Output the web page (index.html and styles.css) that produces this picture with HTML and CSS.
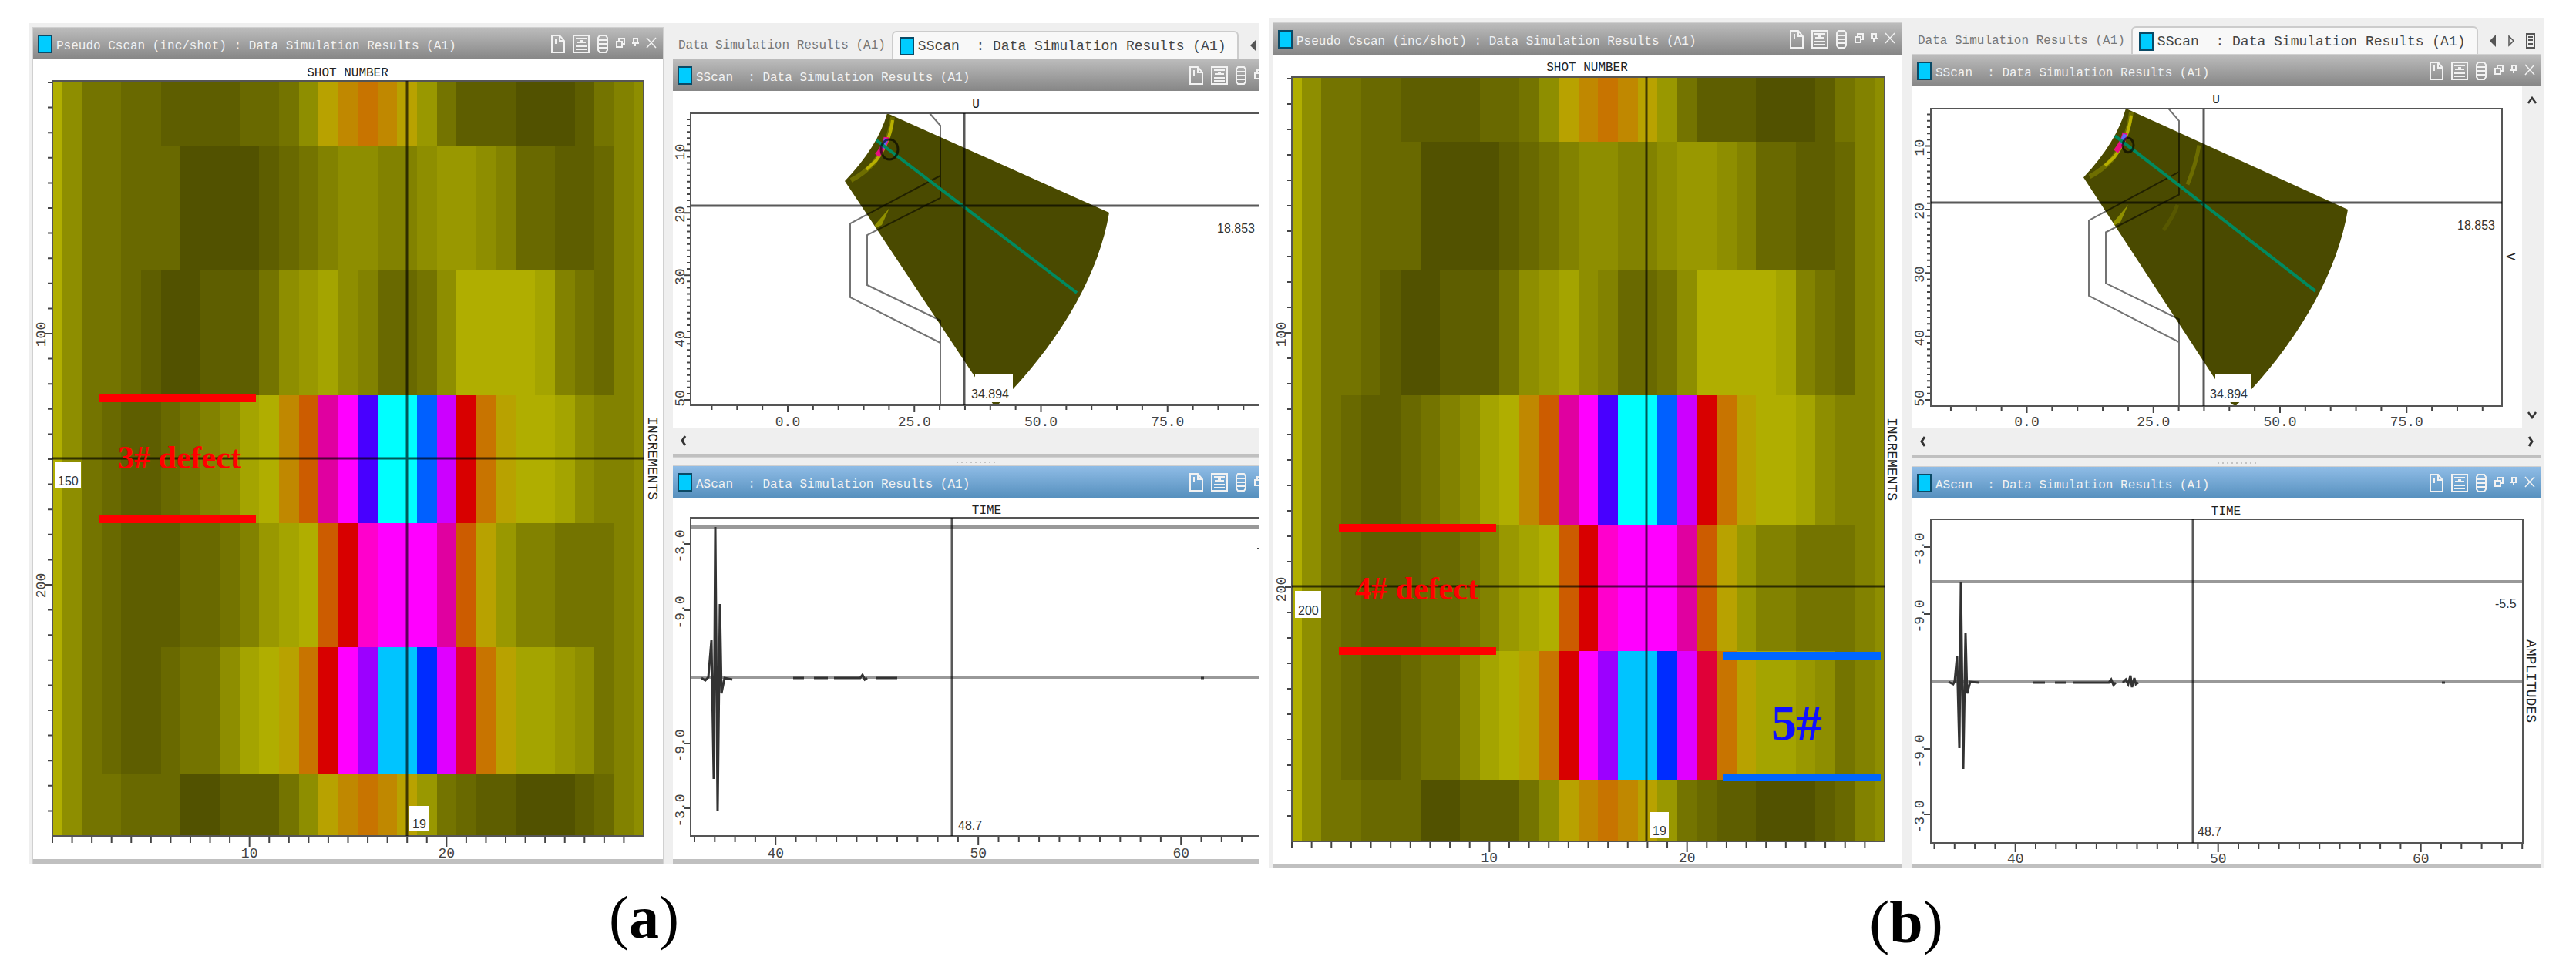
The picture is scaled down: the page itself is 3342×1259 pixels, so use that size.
FILE: index.html
```html
<!DOCTYPE html>
<html lang="en">
<head>
<meta charset="utf-8">
<title>Data Simulation Results</title>
<link rel="stylesheet" href="styles.css">
</head>
<body>
<svg class="defs" width="0" height="0" aria-hidden="true">
  <symbol id="i-doc" viewBox="0 0 20 26"><path d="M2 2h10l6 7v15H2zM12 2v7h6M7 6v7" fill="none" stroke="currentColor" stroke-width="2"/></symbol>
  <symbol id="i-grid" viewBox="0 0 24 26"><path d="M2 2h20v22H2z" fill="none" stroke="currentColor" stroke-width="2"/><path d="M5 6h14M5 20h14M5 16h14M6 11h12M10 9h4" stroke="currentColor" stroke-width="2" fill="none"/></symbol>
  <symbol id="i-db" viewBox="0 0 16 26"><path d="M4 2h8l2 3v16l-2 3H4l-2-3V5zM2 8h12M2 13h12M2 18h12" fill="none" stroke="currentColor" stroke-width="2"/></symbol>
  <symbol id="i-restore" viewBox="0 0 13 26"><path d="M5 9V6h7v7H9M2 10h7v7H2z" fill="none" stroke="currentColor" stroke-width="2"/></symbol>
  <symbol id="i-pin" viewBox="0 0 11 26"><path d="M2 6h7M3 6v6M8 6v6M1 12h9M5 12v4" fill="none" stroke="currentColor" stroke-width="2"/></symbol>
  <symbol id="i-close" viewBox="0 0 14 26"><path d="M1 5l12 13M13 5L1 18" fill="none" stroke="currentColor" stroke-width="1.5"/></symbol>
  <symbol id="i-left" viewBox="0 0 10 16"><path d="M9 0v16L1 8z" fill="currentColor"/></symbol>
  <symbol id="i-right" viewBox="0 0 10 16"><path d="M2 2v12l6-6z" fill="none" stroke="currentColor" stroke-width="1.5"/></symbol>
  <symbol id="i-list" viewBox="0 0 12 20"><path d="M1 1h10v18H1zM3 5h6M3 9h6M3 14h6" fill="none" stroke="currentColor" stroke-width="2"/></symbol>
  <symbol id="i-chev" viewBox="0 0 10 14"><path d="M7 1L3 7l4 6" fill="none" stroke="currentColor" stroke-width="3"/></symbol>
  <symbol id="i-chev-r" viewBox="0 0 10 14"><path d="M3 1l4 6-4 6" fill="none" stroke="currentColor" stroke-width="3"/></symbol>
  <symbol id="i-up" viewBox="0 0 14 10"><path d="M2 9l5-7 5 7" fill="none" stroke="currentColor" stroke-width="2.5"/></symbol>
  <symbol id="i-down" viewBox="0 0 14 10"><path d="M2 1l5 7 5-7" fill="none" stroke="currentColor" stroke-width="2.5"/></symbol>
</svg>

<main class="page">
  <figure class="panel">
    <div class="workspace ws-a">
      <section class="window tall">
        <header class="titlebar"><span class="chip"></span><h2>Pseudo Cscan (inc/shot) : Data Simulation Results (A1)</h2><div class="tools"></div></header>
        <svg class="plot" data-kind="cscan" data-panel="a" viewBox="43 77 817 1038" role="img" aria-label="Pseudo C-scan"></svg>
      </section>
      <div class="column">
        <nav class="tabs">
          <button class="tab" type="button">Data Simulation Results (A1)</button>
          <button class="tab active" type="button"><span class="chip"></span>SScan  : Data Simulation Results (A1)</button>
          <button class="arrow" type="button" aria-label="Previous tab"><svg width="10" height="16"><use href="#i-left"/></svg></button>
        </nav>
        <section class="window upper">
          <header class="titlebar"><span class="chip"></span><h2>SScan  : Data Simulation Results (A1)</h2><div class="tools"></div></header>
          <svg class="plot" data-kind="sscan" data-panel="a" viewBox="873 118 761 437" role="img" aria-label="S-scan"></svg>
          <div class="hscroll"><button type="button" aria-label="Scroll left"><svg width="10" height="14"><use href="#i-chev"/></svg></button></div>
        </section>
        <div class="splitter"></div>
        <section class="window">
          <header class="titlebar selected"><span class="chip"></span><h2>AScan  : Data Simulation Results (A1)</h2><div class="tools"></div></header>
          <svg class="plot" data-kind="ascan" data-panel="a" viewBox="873 646 761 469" role="img" aria-label="A-scan"></svg>
        </section>
      </div>
    </div>
    <figcaption>(<b>a</b>)</figcaption>
  </figure>

  <figure class="panel">
    <div class="workspace ws-b">
      <section class="window tall">
        <header class="titlebar"><span class="chip"></span><h2>Pseudo Cscan (inc/shot) : Data Simulation Results (A1)</h2><div class="tools"></div></header>
        <svg class="plot" data-kind="cscan" data-panel="b" viewBox="1652 71 815 1051" role="img" aria-label="Pseudo C-scan"></svg>
      </section>
      <div class="column">
        <nav class="tabs">
          <button class="tab" type="button">Data Simulation Results (A1)</button>
          <button class="tab active" type="button"><span class="chip"></span>SScan  : Data Simulation Results (A1)</button>
          <button class="arrow" type="button" aria-label="Previous tab"><svg width="10" height="16"><use href="#i-left"/></svg></button>
          <button class="arrow" type="button" aria-label="Next tab"><svg width="10" height="16"><use href="#i-right"/></svg></button>
          <button class="arrow" type="button" aria-label="Tab list"><svg width="12" height="20"><use href="#i-list"/></svg></button>
        </nav>
        <section class="window upper">
          <header class="titlebar"><span class="chip"></span><h2>SScan  : Data Simulation Results (A1)</h2><div class="tools"></div></header>
          <div class="scrollarea">
            <svg class="plot" data-kind="sscan" data-panel="b" viewBox="2481 112 791 443" role="img" aria-label="S-scan"></svg>
            <div class="vscroll">
              <button type="button" aria-label="Scroll up"><svg width="14" height="10"><use href="#i-up"/></svg></button>
              <button type="button" aria-label="Scroll down"><svg width="14" height="10"><use href="#i-down"/></svg></button>
            </div>
          </div>
          <div class="hscroll">
            <button type="button" aria-label="Scroll left"><svg width="10" height="14"><use href="#i-chev"/></svg></button>
            <button type="button" aria-label="Scroll right"><svg width="10" height="14"><use href="#i-chev-r"/></svg></button>
          </div>
        </section>
        <div class="splitter"></div>
        <section class="window">
          <header class="titlebar selected"><span class="chip"></span><h2>AScan  : Data Simulation Results (A1)</h2><div class="tools"></div></header>
          <svg class="plot" data-kind="ascan" data-panel="b" viewBox="2481 647 816 475" role="img" aria-label="A-scan"></svg>
        </section>
      </div>
    </div>
    <figcaption>(<b>b</b>)</figcaption>
  </figure>
</main>
<script src="plots.js"></script>
</body>
</html>
```

FILE: styles.css
```css
* { box-sizing: border-box; }

body {
  margin: 0;
  background: #fff;
  font-family: "Liberation Mono", monospace;
  font-size: 16px;
  color: #333;
}

.defs { position: absolute; }

.page {
  display: grid;
  grid-template-columns: 1597fr 1654fr;
  column-gap: 12px;
  align-items: center;
  padding: 24px 42px 0 37px;
}

.panel { margin: 0; min-width: 0; }

.workspace {
  display: grid;
  background: #efefef;
  overflow: hidden;
}

.ws-a {
  grid-template-columns: 817fr 761fr;
  column-gap: 13px;
  padding-left: 6px;
}

.ws-b {
  grid-template-columns: 815fr 816fr;
  column-gap: 14px;
  padding: 0 3px 0 6px;
}

.window {
  background: #fff;
  border-bottom: 6px solid #c0c0c0;
  outline: 1px solid #d0d0d0;
}

.ws-b .window { border-bottom-width: 5px; }
.workspace .upper { border-bottom-width: 4px; }

.tall { margin-top: 6px; }

.column { min-width: 0; overflow: hidden; }

.titlebar {
  display: flex;
  align-items: center;
  min-width: 815px;
  height: 41px;
  padding: 0 8px 0 6px;
  background: linear-gradient(#bcbcbc, #868686);
  color: #f2f2f2;
}

.tall .titlebar { min-width: 0; }

.titlebar.selected { background: linear-gradient(#8fbce6, #5690be); }

.titlebar h2 {
  flex: 1;
  margin: 0;
  padding: 6px 0 0 5px;
  font-size: 16px;
  font-weight: normal;
  line-height: 20px;
  white-space: pre;
}

.chip {
  flex: none;
  width: 19px;
  height: 24px;
  border: 2px solid #0a4a66;
  background: #00ccff;
}

.tools { display: flex; gap: 8px; }

button {
  display: flex;
  align-items: center;
  padding: 0;
  border: 0;
  background: none;
  color: inherit;
  font: inherit;
}

.tabs {
  display: flex;
  align-items: flex-end;
  height: 47px;
  padding-left: 7px;
  white-space: pre;
}

.tab { flex: none; height: 37px; color: #777; }

.tab.active {
  gap: 5px;
  margin-left: 8px;
  padding: 0 14px 0 8px;
  border: 2px solid #ccc;
  border-bottom: 0;
  border-radius: 6px 6px 0 0;
  background: #f8f8f8;
  color: #444;
  font-size: 18px;
}

.arrow { height: 37px; margin-left: 14px; color: #555; }

.plot { display: block; width: 100%; height: auto; overflow: visible; }

.scrollarea { display: grid; grid-template-columns: 791fr 25fr; }

.vscroll {
  display: flex;
  flex-direction: column;
  justify-content: space-between;
  align-items: center;
  padding: 13px 0 11px;
  background: #efefef;
}

.hscroll {
  display: flex;
  justify-content: space-between;
  height: 35px;
  padding: 0 9px;
  background: #efefef;
}

.ws-a .hscroll { height: 34px; }

.splitter {
  height: 12px;
  background: repeating-linear-gradient(90deg, #c4c4c4 0 2px, #efefef 2px 6px) 52% 6px / 54px 2px no-repeat;
}

figcaption {
  padding-top: 22px;
  font: 78px/96px "Liberation Serif", serif;
  color: #000;
  text-align: center;
}

.axis { stroke: #444; stroke-width: 2; fill: none; }
.frame { stroke: #555; stroke-width: 2; fill: none; }
.soft { stroke: #999; stroke-width: 4; fill: none; }
.cursor { stroke: #000; stroke-opacity: .65; stroke-width: 3; fill: none; }
.profile { stroke: #000; stroke-opacity: .55; stroke-width: 2; fill: none; }
.beam { stroke: #008a60; stroke-width: 4; fill: none; }
.wave { stroke: #333; stroke-width: 3; fill: none; }
.tag { fill: #fff; }
.mark-red { fill: #ff0000; }
.mark-blue { fill: #0066ff; }

.num, .name { font: 18px "Liberation Mono", monospace; fill: #444; text-anchor: middle; }
.head { font: 16px "Liberation Mono", monospace; fill: #222; text-anchor: middle; }
.name { fill: #222; }
.value { font: 16px "Liberation Sans", sans-serif; fill: #333; }
.note { font: bold 42px "Liberation Serif", serif; fill: #ff0000; text-anchor: middle; }
.note-big { font: bold 66px "Liberation Serif", serif; fill: #1010ff; text-anchor: middle; }
```

FILE: plots.js
```js
const PALETTE = {
  a: '#b0ae00', b: '#a4a400', c: '#999800', d: '#8e8e00', e: '#828200',
  f: '#747400', g: '#696900', h: '#5e5e00', i: '#525200', j: '#b8a200',
  k: '#c08800', l: '#c87400', m: '#cc5c00', n: '#d80000', o: '#e000a0',
  p: '#ff00ff', q: '#4800ff', r: '#00ffff', s: '#0060ff', t: '#cc00ff',
  u: '#ff00cc', v: '#9c00ff', w: '#00c4ff', x: '#002cff', y: '#e00038', z: '#e000ff'
};

// One letter per shot, one string per increment band
const BANDS = [
  'adffgghhhhggfdjklkjcfhhhiiihfed',
  'adffgggiiiihgfeddeedccdegghhged',
  'adffghiihhhfdcbdeggfdaaaabefged',
  'adfghhgfedbakmopqrrstnljaabdeed',
  'adfghhhggfecbamnupppomjceefffed',
  'adfghhgffdbajlnpvwwxzyljbbcdfed',
  'adffgggiihhhfdjklkjcfghhiiihged'
];

const CSCAN = {
  a: { left: 68, right: 835, rows: [105, 189, 351, 513, 679, 840, 1005, 1085], tick0: 107, step: 32.6,
       cx: 528, cy: 595, head: [451, 99], name: [841, 595], nums: [[59, 434, '100'], [59, 760, '200']], bottom: 1113,
       tags: [[71, 600, 34, 34, '150'], [531, 1046, 26, 33, '19']] },
  b: { left: 1676, right: 2445, rows: [100, 184, 350, 513, 682, 845, 1012, 1092], tick0: 102, step: 33,
       cx: 2136, cy: 761, head: [2059, 92], name: [2449, 596], nums: [[1668, 434, '100'], [1668, 765, '200']], bottom: 1119,
       tags: [[1680, 767, 34, 35, '200'], [2140, 1054, 25, 34, '19']] }
};

const rect = (x, y, w, h, attrs) => `<rect x="${x}" y="${y}" width="${w}" height="${h}" ${attrs}/>`;
const path = (d, cls) => `<path class="${cls}" d="${d}"/>`;
const text = (x, y, s, cls, turn) =>
  `<text class="${cls}" ${turn ? `transform="translate(${x} ${y}) rotate(${turn})"` : `x="${x}" y="${y}"`}>${s}</text>`;

function cscan(key) {
  const c = CSCAN[key], step = (c.right - c.left) / 30, top = c.rows[0], end = c.rows[7];
  let out = '<g shape-rendering="crispEdges">';
  BANDS.forEach((band, r) => [...band].forEach((ch, i) => {
    const x0 = Math.round(Math.max(c.left, c.left + (i - .5) * step));
    const x1 = Math.round(Math.min(c.right, c.left + (i + .5) * step));
    out += rect(x0, c.rows[r], x1 - x0, c.rows[r + 1] - c.rows[r], `fill="${PALETTE[ch]}"`);
  }));
  out += '</g>';
  let ticks = '';
  for (let i = 0; i < 30; i++) ticks += `M${c.left + i * step} ${end}v${i === 10 || i === 20 ? 14 : 9}`;
  for (let i = 0; i < 30; i++) ticks += `M${c.left} ${c.tick0 + i * c.step}h-${i === 10 || i === 20 ? 9 : 6}`;
  out += path(ticks, 'axis') + rect(c.left, top, c.right - c.left, end - top, 'class="frame"');
  out += path(`M${c.cx} ${top}V${end}M${c.left} ${c.cy}H${c.right}`, 'cursor');
  out += text(...c.head, 'SHOT NUMBER', 'head') + text(...c.name, 'INCREMENTS', 'name', 90);
  c.nums.forEach(n => { out += text(...n, 'num', -90); });
  out += text(c.left + 10 * step, c.bottom, '10', 'num') + text(c.left + 20 * step, c.bottom, '20', 'num');
  c.tags.forEach(([x, y, w, h, s]) => { out += rect(x, y, w, h, 'class="tag"') + text(x + 4, y + h - 4, s, 'value'); });
  const bar = (x, y, w, cls) => rect(x, y, w, 10, `class="${cls}"`);
  if (key === 'a') {
    out += bar(128, 512, 204, 'mark-red') + bar(128, 669, 204, 'mark-red') + text(233, 608, '3# defect', 'note');
  } else {
    out += bar(1737, 680, 204, 'mark-red') + bar(1737, 840, 204, 'mark-red') + text(1838, 778, '4# defect', 'note');
    out += bar(2235, 846, 205, 'mark-blue') + bar(2235, 1004, 205, 'mark-blue') + text(2331, 960, '5#', 'note-big');
  }
  return out;
}

// Sector drawing, shared by both panels
function sector(key) {
  const blips = key === 'b'
    ? `<path d="M1246 194Q1242 218 1231 244" stroke="#6c6c00" stroke-width="5" fill="none"/>
       <path d="M1218 270Q1212 286 1200 302" stroke="#585800" stroke-width="5" fill="none"/>` : '';
  return `
    <path d="M1151 147L1439 276C1425 358 1375 445 1294 526Q1292 526 1288 524L1096 235Q1139 190 1151 147z" fill="#4a4a00"/>
    <path d="M1158 152Q1154 186 1133 212Q1120 226 1104 234" stroke="#6e6e00" stroke-width="6" fill="none"/>
    <path d="M1158 156Q1154 186 1136 209L1124 220" stroke="#b8b000" stroke-width="4" fill="none"/>
    <path d="M1150 178Q1149 188 1138 202" stroke="#e81080" stroke-width="7" fill="none"/>
    <path d="M1150 180L1145 192" stroke="#6068ff" stroke-width="5" fill="none"/>
    <path d="M1154 270L1144 292L1136 296L1135 292z" fill="#909000"/>${blips}
    <path class="profile" d="M1206 147L1220 163V257L1125 305V370L1220 416V526M1220 228L1103 290V386L1220 445"/>
    <path class="beam" d="M1137 182L1397 380"/>
    <ellipse cx="1154" cy="194" rx="${key === 'a' ? 11 : 7}" ry="${key === 'a' ? 13 : 9}" class="cursor"/>`;
}

const SSCAN = {
  a: { left: 896, right: 1640, top: 147, end: 526, u0: 1022, v0: 195.4, dv: 8.09, cx: 1251, cy: 267,
       head: [1266, 140], numX: 888, val: [1579, 302], tag: [1265, 486, 49, 36], tagText: 1260, move: '' },
  b: { left: 2505, right: 3246, top: 141, end: 527, u0: 2629.5, v0: 189.6, dv: 8.236, cx: 2859, cy: 263,
       head: [2875, 134], numX: 2496, val: [3188, 298], tag: [2874, 486, 47, 36], tagText: 2867,
       move: 'translate(1607 -9) scale(1 1.018)' }
};

function sscan(key) {
  const c = SSCAN[key], du = 32.85;
  let out = `<g transform="${c.move}">${sector(key)}</g>`, ticks = '';
  for (let i = -3; i < 19; i++) {
    const x = c.u0 + i * du;
    if (x < c.right) ticks += `M${x} ${c.end}v${i % 5 ? 6 : 9}`;
  }
  for (let v = 5; v <= 50; v++) ticks += `M${c.left} ${c.v0 + (v - 10) * c.dv}h-${v % 10 ? 5 : 8}`;
  out += path(ticks, 'axis') + rect(c.left, c.top, c.right - c.left, c.end - c.top, 'class="frame"');
  out += path(`M${c.cx} ${c.top}V${c.end}M${c.left} ${c.cy}H${c.right}`, 'cursor');
  out += rect(...c.tag, 'class="tag"') + text(c.tagText, 517, '34.894', 'value') + text(...c.val, '18.853', 'value');
  out += text(...c.head, 'U', 'head');
  if (key === 'b') out += text(3252, 333, 'V', 'head', 90);
  [0, 25, 50, 75].forEach((u, i) => { out += text(c.u0 + i * 5 * du, 553, u + '.0', 'num'); });
  [10, 20, 30, 40, 50].forEach(v => { out += text(c.numX, c.v0 + (v - 10) * c.dv + (v === 50 ? -2 : 2), v, 'num', -90); });
  return out;
}

const ASCAN = {
  a: { left: 896, right: 1640, top: 672, end: 1085, u36: 901, level: 684, zero: 879, cx: 1235, head: [1280, 667],
       numX: 888, ticks: [706, 792, 965, 1049], bottom: 1113, val: [1243, 1077],
       wave: 'M910 880L915 883L919 879L923 831L926 1011L928 684L931 1053L934 784L936 900L940 880L950 882',
       noise: 'M1029 880h14M1056 880h18M1082 880h34l3 -4l3 6l3 -2M1136 880h28M1558 880h4' },
  b: { left: 2505, right: 3273, top: 674, end: 1094, u36: 2509.5, level: 755, zero: 885, cx: 2845, head: [2888, 668],
       numX: 2496, ticks: [710, 797, 972, 1057], bottom: 1120, val: [2851, 1085],
       wave: 'M2528 885L2534 888L2536 884L2539 852L2542 971L2544 755L2547 998L2550 822L2552 900L2556 885L2568 886',
       noise: 'M2637 886h16M2666 886h14M2690 886h46l3 -4l3 7l3 -3M2754 886l4 -4l3 6l3 -11l2 15l3 -12l2 8l3 -2M3168 886h4' }
};

function ascan(key) {
  const c = ASCAN[key], step = 26.3;
  let ticks = '', out = '';
  for (let i = 0; c.u36 + i * step < c.right; i++) ticks += `M${c.u36 + i * step} ${c.end}v${(i + 6) % 10 ? 8 : 12}`;
  c.ticks.forEach(y => { ticks += `M${c.left} ${y}h-9`; });
  out += path(`M${c.left} ${c.level}H${c.right}M${c.left} ${c.zero}H${c.right}`, 'soft');
  out += path(ticks, 'axis') + rect(c.left, c.top, c.right - c.left, c.end - c.top, 'class="frame"');
  out += path(`M${c.cx} ${c.top}V${c.end}`, 'cursor') + path(c.wave, 'wave') + path(c.noise, 'wave');
  out += text(...c.head, 'TIME', 'head') + text(...c.val, '48.7', 'value');
  ['-3.0', '-9.0', '-9.0', '-3.0'].forEach((s, i) => { out += text(c.numX, c.ticks[i] + 3, s, 'num', -90); });
  [40, 50, 60].forEach((n, i) => { out += text(c.u36 + (4 + i * 10) * step, c.bottom, n, 'num'); });
  if (key === 'b') out += text(3237, 789, '-5.5', 'value') + text(3278, 884, 'AMPLITUDES', 'name', 90);
  else out += path('M1631 712h4', 'axis');
  return out;
}

const draw = { cscan, sscan, ascan };
document.querySelectorAll('.plot').forEach(svg => { svg.innerHTML = draw[svg.dataset.kind](svg.dataset.panel); });

const TOOLS = [['doc', 20, 'New'], ['grid', 24, 'Layout'], ['db', 16, 'Data'], ['restore', 13, 'Restore'], ['pin', 11, 'Pin'], ['close', 14, 'Close']];
document.querySelectorAll('.tools').forEach(el => {
  el.innerHTML = TOOLS.map(([id, w, label]) =>
    `<button type="button" aria-label="${label}"><svg width="${w}" height="26"><use href="#i-${id}"/></svg></button>`).join('');
});
```
